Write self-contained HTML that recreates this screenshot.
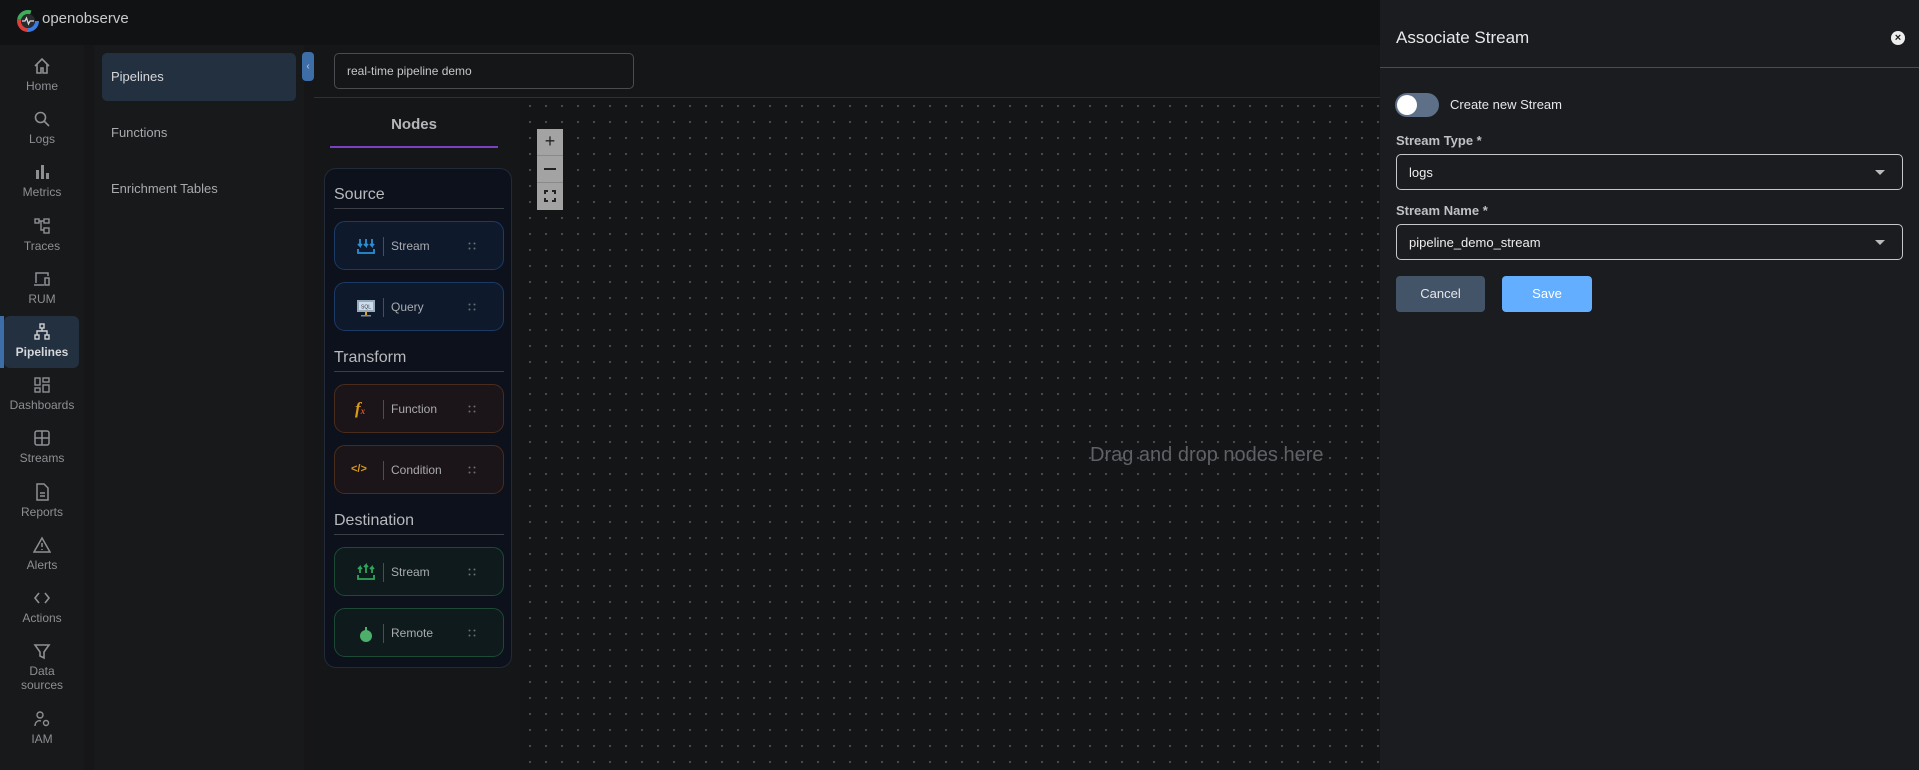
<!DOCTYPE html>
<html><head><meta charset="utf-8"><style>
*{box-sizing:border-box;margin:0;padding:0}
body{width:1919px;height:770px;overflow:hidden;background:#161618;font-family:"Liberation Sans",sans-serif;position:relative;color:#bbb}
.a{position:absolute}
.nav{left:0;top:45px;width:84px;height:725px;background:#18191b}
.ni{position:absolute;left:0;width:84px;text-align:center;font-size:12px;color:#8d8f93}
.ni svg{display:block;margin:0 auto 4px}
.dots{left:520px;top:98px;width:860px;height:672px;background-color:#141517;background-image:radial-gradient(circle,#4a4c50 1px,transparent 1.3px);background-size:16px 16px;background-position:2px 16px}
.card{position:absolute;left:9px;width:170px;height:49px;border-radius:11px;font-size:12px;color:#a9abaf}
.card .ic{position:absolute;left:20px;top:14px;width:22px;height:22px}
.card .sep{position:absolute;left:48px;top:15px;width:1px;height:19px;background:#4a4d55}
.card .t{position:absolute;left:56px;top:17px}
.card .g{position:absolute;left:133px;top:20px}
.hd{position:absolute;left:9px;width:170px;font-size:16px;color:#b8b9bc;border-bottom:1px solid #3b3e45;padding-bottom:4px}
</style></head><body>
<div class="a" style="left:0;top:0;width:1380px;height:45px;background:#111214"></div>
<svg class="a" style="left:16px;top:9px" width="24" height="24" viewBox="0 0 24 24"><circle cx="12" cy="12" r="9" fill="none" stroke="#3a7be0" stroke-width="4" stroke-dasharray="15 50"/><circle cx="12" cy="12" r="9" fill="none" stroke="#d9403a" stroke-width="4" stroke-dasharray="0 15 15 50"/><circle cx="12" cy="12" r="9" fill="none" stroke="#3fae5a" stroke-width="4" stroke-dasharray="0 30 15 50"/><circle cx="12" cy="12" r="7" fill="#2a2b2e"/><path d="M6 12h3l1.5-3 2 6 1.5-3h4" stroke="#ddd" fill="none" stroke-width="1.2"/></svg>
<div class="a" style="left:42px;top:10px;font-size:15px;color:#c9cacc">openobserve</div>
<div class="a nav"></div>
<div class="a" style="left:4px;top:316px;width:75px;height:52px;background:#22303f;border-radius:6px"></div>
<div class="a" style="left:0;top:316px;width:4px;height:52px;background:#3d6ea8"></div>
<div class="ni" style="top:57px"><svg width="18" height="18" viewBox="0 0 18 18" fill="none" stroke="#8d8f93" stroke-width="1.6"><path d="M2 9L9 2l7 7M4 7v9h4v-5h2v5h4V7"/></svg>Home</div>
<div class="ni" style="top:110px"><svg width="18" height="18" viewBox="0 0 18 18" fill="none" stroke="#8d8f93" stroke-width="1.6"><circle cx="7.5" cy="7.5" r="5"/><path d="M11 11l5 5"/></svg>Logs</div>
<div class="ni" style="top:163px"><svg width="18" height="18" viewBox="0 0 18 18" fill="#8d8f93"><rect x="3" y="7" width="3" height="9"/><rect x="8" y="2" width="3" height="14"/><rect x="13" y="10" width="3" height="6"/></svg>Metrics</div>
<div class="ni" style="top:217px"><svg width="18" height="18" viewBox="0 0 18 18" fill="none" stroke="#8d8f93" stroke-width="1.4"><rect x="2" y="2" width="4" height="4"/><rect x="11" y="2" width="5" height="4"/><rect x="11" y="11" width="5" height="5"/><path d="M6 4h5M8 4v9h3"/></svg>Traces</div>
<div class="ni" style="top:270px"><svg width="18" height="18" viewBox="0 0 18 18" fill="none" stroke="#8d8f93" stroke-width="1.5"><path d="M3 13V3h12v3M1 15h10"/><rect x="12" y="8" width="4" height="7"/></svg>RUM</div>
<div class="ni" style="top:323px;color:#d5d7da;font-weight:bold"><svg width="18" height="18" viewBox="0 0 18 18" fill="none" stroke="#d0d2d6" stroke-width="1.4"><rect x="7" y="1" width="4" height="4"/><rect x="2" y="12" width="4" height="4"/><rect x="12" y="12" width="4" height="4"/><path d="M9 5v3M4 12V8h10v4"/></svg>Pipelines</div>
<div class="ni" style="top:376px"><svg width="18" height="18" viewBox="0 0 18 18" fill="none" stroke="#8d8f93" stroke-width="1.4"><rect x="2" y="2" width="5" height="7"/><rect x="10" y="2" width="6" height="4"/><rect x="2" y="12" width="5" height="4"/><rect x="10" y="9" width="6" height="7"/></svg>Dashboards</div>
<div class="ni" style="top:429px"><svg width="18" height="18" viewBox="0 0 18 18" fill="none" stroke="#8d8f93" stroke-width="1.5"><rect x="2" y="2" width="14" height="14" rx="2"/><path d="M9 2v14M2 9h14"/></svg>Streams</div>
<div class="ni" style="top:483px"><svg width="18" height="18" viewBox="0 0 18 18" fill="none" stroke="#8d8f93" stroke-width="1.5"><path d="M4 1h7l4 4v12H4z M7 10h5M7 13h5"/></svg>Reports</div>
<div class="ni" style="top:536px"><svg width="18" height="18" viewBox="0 0 18 18" fill="none" stroke="#8d8f93" stroke-width="1.5"><path d="M9 2L1 16h16z M9 7v4M9 13v1"/></svg>Alerts</div>
<div class="ni" style="top:589px"><svg width="18" height="18" viewBox="0 0 18 18" fill="none" stroke="#8d8f93" stroke-width="1.6"><path d="M6 4L2 9l4 5M12 4l4 5-4 5"/></svg>Actions</div>
<div class="ni" style="top:642px;line-height:14px"><svg width="18" height="18" viewBox="0 0 18 18" fill="none" stroke="#8d8f93" stroke-width="1.6"><path d="M2 3h14l-5 7v6l-4-2v-4z"/></svg>Data<br>sources</div>
<div class="ni" style="top:710px"><svg width="18" height="18" viewBox="0 0 18 18" fill="none" stroke="#8d8f93" stroke-width="1.4"><circle cx="7" cy="5" r="3"/><path d="M2 16c0-4 3-6 6-5"/><circle cx="13" cy="13" r="2.5"/></svg>IAM</div>
<div class="a" style="left:94px;top:45px;width:210px;height:725px;background:#18191b"></div>
<div class="a" style="left:102px;top:53px;width:194px;height:48px;background:#22303f;border-radius:5px"></div>
<div class="a" style="left:111px;top:69px;font-size:13px;color:#d5d7da">Pipelines</div>
<div class="a" style="left:111px;top:125px;font-size:13px;color:#a7a9ad">Functions</div>
<div class="a" style="left:111px;top:181px;font-size:13px;color:#a7a9ad">Enrichment Tables</div>
<div class="a" style="left:302px;top:52px;width:12px;height:29px;background:#3d6ea8;border-radius:4px;color:#ccc;font-size:10px;text-align:center;line-height:29px">‹</div>
<div class="a" style="left:314px;top:45px;width:1066px;height:53px;background:#151618;border-bottom:1px solid #2e3033"></div>
<div class="a" style="left:334px;top:53px;width:300px;height:36px;border:1px solid #4a4c50;border-radius:5px;font-size:12px;color:#c5c7ca;padding:10px 12px">real-time pipeline demo</div>
<div class="a" style="left:314px;top:98px;width:206px;height:672px;background:#151618"></div>
<div class="a" style="left:330px;top:116px;width:168px;text-align:center;font-size:15px;font-weight:bold;color:#b5b6b9">Nodes</div>
<div class="a" style="left:330px;top:146px;width:168px;height:2px;background:#7b3fc2"></div>
<div class="a" style="left:324px;top:168px;width:188px;height:500px;border:1px solid #232a3a;border-radius:12px;background:#0d111b">
<div class="hd" style="top:17px">Source</div>
<div class="card" style="top:52px;border:1px solid #1c3a66;background:#0e1a2c"><svg class="ic" viewBox="0 0 22 22" fill="none" stroke="#2a8fd6" stroke-width="1.8"><path d="M5 3v7l-2-2M5 10l2-2M11 3v7l-2-2M11 10l2-2M17 3v7l-2-2M17 10l2-2M3 13v4h16v-4"/></svg><div class="sep"></div><div class="t">Stream</div><svg class="g" width="8" height="8"><circle cx="1.5" cy="1.5" r="1" fill="#6a6d73"/><circle cx="6.5" cy="1.5" r="1" fill="#6a6d73"/><circle cx="1.5" cy="6.5" r="1" fill="#6a6d73"/><circle cx="6.5" cy="6.5" r="1" fill="#6a6d73"/></svg></div>
<div class="card" style="top:113px;border:1px solid #1c3a66;background:#0e1a2c"><svg class="ic" viewBox="0 0 22 22"><rect x="2" y="3" width="18" height="12" fill="#9ab"/><rect x="4" y="5" width="14" height="8" fill="#cde"/><text x="11" y="11.5" font-size="5" text-anchor="middle" fill="#333" font-family="Liberation Sans">SQL</text><rect x="10" y="15" width="2" height="3" fill="#d9a62a"/><rect x="6" y="18" width="10" height="1.5" fill="#889"/></svg><div class="sep"></div><div class="t">Query</div><svg class="g" width="8" height="8"><circle cx="1.5" cy="1.5" r="1" fill="#6a6d73"/><circle cx="6.5" cy="1.5" r="1" fill="#6a6d73"/><circle cx="1.5" cy="6.5" r="1" fill="#6a6d73"/><circle cx="6.5" cy="6.5" r="1" fill="#6a6d73"/></svg></div>
<div class="hd" style="top:180px">Transform</div>
<div class="card" style="top:215px;border:1px solid #4a2c1c;background:#1b1419"><div class="ic" style="color:#d99a1a;font-style:italic;font-weight:bold;font-family:'Liberation Serif',serif;font-size:17px">f<span style="font-size:9px;color:#d8552a">x</span></div><div class="sep"></div><div class="t">Function</div><svg class="g" width="8" height="8"><circle cx="1.5" cy="1.5" r="1" fill="#6a6d73"/><circle cx="6.5" cy="1.5" r="1" fill="#6a6d73"/><circle cx="1.5" cy="6.5" r="1" fill="#6a6d73"/><circle cx="6.5" cy="6.5" r="1" fill="#6a6d73"/></svg></div>
<div class="card" style="top:276px;border:1px solid #4a2c1c;background:#1b1419"><div class="ic" style="color:#d99a1a;font-weight:bold;font-size:11px;top:17px;left:16px">&lt;/&gt;</div><div class="sep"></div><div class="t">Condition</div><svg class="g" width="8" height="8"><circle cx="1.5" cy="1.5" r="1" fill="#6a6d73"/><circle cx="6.5" cy="1.5" r="1" fill="#6a6d73"/><circle cx="1.5" cy="6.5" r="1" fill="#6a6d73"/><circle cx="6.5" cy="6.5" r="1" fill="#6a6d73"/></svg></div>
<div class="hd" style="top:343px">Destination</div>
<div class="card" style="top:378px;border:1px solid #1d4a34;background:#0e1a1c"><svg class="ic" viewBox="0 0 22 22" fill="none" stroke="#2fa55a" stroke-width="1.8"><path d="M5 11V5l-2 2M5 5l2 2M11 11V3l-2 2M11 3l2 2M17 11V5l-2 2M17 5l2 2M3 13v4h16v-4"/></svg><div class="sep"></div><div class="t">Stream</div><svg class="g" width="8" height="8"><circle cx="1.5" cy="1.5" r="1" fill="#6a6d73"/><circle cx="6.5" cy="1.5" r="1" fill="#6a6d73"/><circle cx="1.5" cy="6.5" r="1" fill="#6a6d73"/><circle cx="6.5" cy="6.5" r="1" fill="#6a6d73"/></svg></div>
<div class="card" style="top:439px;border:1px solid #1d4a34;background:#0e1a1c"><svg class="ic" viewBox="0 0 22 22"><circle cx="11" cy="13" r="6" fill="#4caf6a"/><rect x="10" y="4" width="2" height="4" fill="#4caf6a"/></svg><div class="sep"></div><div class="t">Remote</div><svg class="g" width="8" height="8"><circle cx="1.5" cy="1.5" r="1" fill="#6a6d73"/><circle cx="6.5" cy="1.5" r="1" fill="#6a6d73"/><circle cx="1.5" cy="6.5" r="1" fill="#6a6d73"/><circle cx="6.5" cy="6.5" r="1" fill="#6a6d73"/></svg></div>
</div>
<div class="a dots"></div>
<div class="a" style="left:537px;top:129px;width:26px;height:81px;background:#a3a3a3"></div>
<div class="a" style="left:537px;top:155px;width:26px;height:1px;background:#8a8a8a"></div>
<div class="a" style="left:537px;top:182px;width:26px;height:1px;background:#8a8a8a"></div>
<div class="a" style="left:537px;top:131px;width:26px;text-align:center;font-size:18px;color:#222">+</div>
<div class="a" style="left:544px;top:168px;width:12px;height:2px;background:#222"></div>
<svg class="a" style="left:544px;top:190px" width="12" height="12" fill="none" stroke="#222" stroke-width="2"><path d="M1 4V1h3M8 1h3v3M11 8v3H8M4 11H1V8"/></svg>
<div class="a" style="left:1090px;top:444px;font-size:20px;color:#5f6165">Drag and drop nodes here</div>
<div class="a" style="left:1380px;top:0;width:539px;height:770px;background:#1b1c1f"></div>
<div class="a" style="left:1396px;top:28px;font-size:17px;color:#e8e9ea">Associate Stream</div>
<div class="a" style="left:1891px;top:31px;width:14px;height:14px;border-radius:50%;background:#eee;color:#1b1c1f;font-size:11px;font-weight:bold;text-align:center;line-height:14px">×</div>
<div class="a" style="left:1380px;top:67px;width:539px;height:1px;background:#4a4c50"></div>
<div class="a" style="left:1395px;top:93px;width:44px;height:24px;border-radius:12px;background:#5d7087"></div>
<div class="a" style="left:1397px;top:95px;width:20px;height:20px;border-radius:50%;background:#fff"></div>
<div class="a" style="left:1450px;top:97px;font-size:13px;color:#e5e6e8">Create new Stream</div>
<div class="a" style="left:1396px;top:133px;font-size:13px;font-weight:bold;color:#bfc1c4">Stream Type *</div>
<div class="a" style="left:1396px;top:154px;width:507px;height:36px;border:1px solid #c5c7ca;border-radius:5px;font-size:13px;color:#eee;padding:10px 12px">logs</div>
<div class="a" style="left:1875px;top:170px;border:5px solid transparent;border-top:5px solid #bbb"></div>
<div class="a" style="left:1396px;top:203px;font-size:13px;font-weight:bold;color:#bfc1c4">Stream Name *</div>
<div class="a" style="left:1396px;top:224px;width:507px;height:36px;border:1px solid #c5c7ca;border-radius:5px;font-size:13px;color:#eee;padding:10px 12px">pipeline_demo_stream</div>
<div class="a" style="left:1875px;top:240px;border:5px solid transparent;border-top:5px solid #bbb"></div>
<div class="a" style="left:1396px;top:276px;width:89px;height:36px;background:#445468;border-radius:4px;font-size:13px;color:#e5e6e8;text-align:center;line-height:36px">Cancel</div>
<div class="a" style="left:1502px;top:276px;width:90px;height:36px;background:#63aeff;border-radius:4px;font-size:13px;color:#fff;text-align:center;line-height:36px">Save</div>
</body></html>
